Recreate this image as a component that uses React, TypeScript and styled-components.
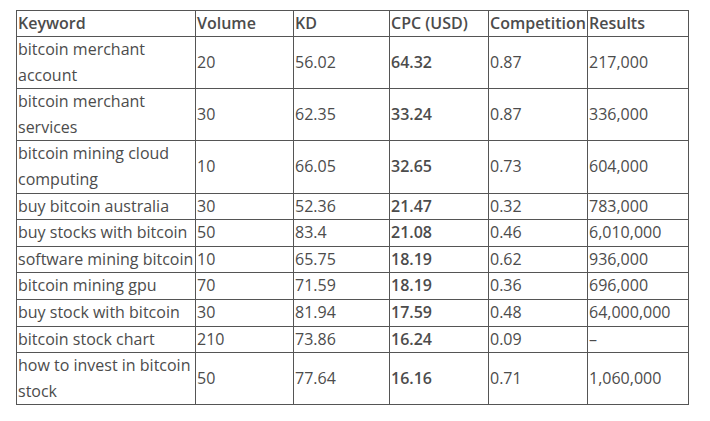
import * as React from "react";
import styled, { createGlobalStyle } from "styled-components";

const Global = createGlobalStyle`
  html, body {
    margin: 0;
    padding: 0;
    background: #ffffff;
  }
`;

const Page = styled.div`
  padding: 10px 0 0 16px;
  font-family: "Open Sans", "Liberation Sans", sans-serif;
  font-size: 16px;
  color: #4c4c4c;
`;

const Table = styled.table`
  border-collapse: collapse;
  table-layout: fixed;
  width: 672px;
`;

const Col = styled.col<{ $w: number }>`
  width: ${(p) => p.$w}px;
`;

const HeadCell = styled.th`
  border: 1px solid #555555;
  padding: 0 1px;
  text-align: left;
  font-weight: 600;
  line-height: 25px;
  white-space: nowrap;
  overflow: visible;
`;

const Cell = styled.td<{ $strong?: boolean }>`
  border: 1px solid #555555;
  padding: 0 1px;
  text-align: left;
  vertical-align: middle;
  line-height: 25.6px;
  font-weight: ${(p) => (p.$strong ? 600 : 400)};
`;

type Row = [string, string, string, string, string, string];

const columns: [string, number][] = [
  ["Keyword", 179],
  ["Volume", 98],
  ["KD", 96],
  ["CPC (USD)", 99],
  ["Competition", 99],
  ["Results", 101],
];

const rows: Row[] = [
  ["bitcoin merchant account", "20", "56.02", "64.32", "0.87", "217,000"],
  ["bitcoin merchant services", "30", "62.35", "33.24", "0.87", "336,000"],
  ["bitcoin mining cloud computing", "10", "66.05", "32.65", "0.73", "604,000"],
  ["buy bitcoin australia", "30", "52.36", "21.47", "0.32", "783,000"],
  ["buy stocks with bitcoin", "50", "83.4", "21.08", "0.46", "6,010,000"],
  ["software mining bitcoin", "10", "65.75", "18.19", "0.62", "936,000"],
  ["bitcoin mining gpu", "70", "71.59", "18.19", "0.36", "696,000"],
  ["buy stock with bitcoin", "30", "81.94", "17.59", "0.48", "64,000,000"],
  ["bitcoin stock chart", "210", "73.86", "16.24", "0.09", "–"],
  ["how to invest in bitcoin stock", "50", "77.64", "16.16", "0.71", "1,060,000"],
];

export default function App() {
  return (
    <Page>
      <Global />
      <Table>
        <colgroup>
          {columns.map(([label, w]) => (
            <Col key={label} $w={w} />
          ))}
        </colgroup>
        <thead>
          <tr>
            {columns.map(([label]) => (
              <HeadCell key={label}>{label}</HeadCell>
            ))}
          </tr>
        </thead>
        <tbody>
          {rows.map((r) => (
            <tr key={r[0]}>
              {r.map((v, i) => (
                <Cell key={i} $strong={i === 3}>
                  {v}
                </Cell>
              ))}
            </tr>
          ))}
        </tbody>
      </Table>
    </Page>
  );
}
